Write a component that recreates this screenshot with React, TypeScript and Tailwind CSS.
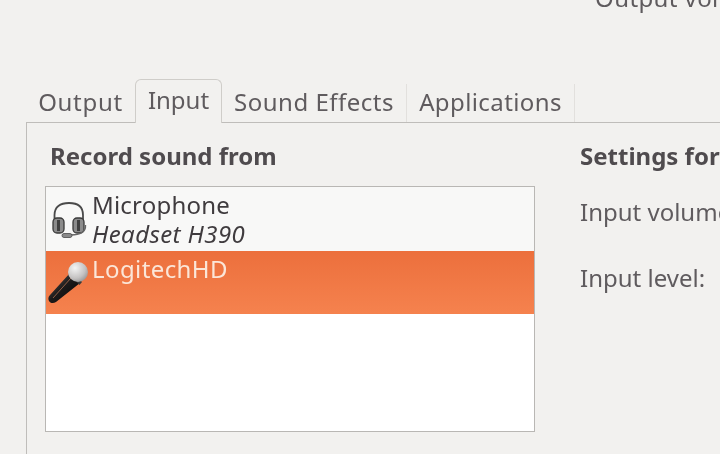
const font = "font-['Noto_Sans','Open_Sans',sans-serif]";

function Headset() {
  return (
    <svg width="38" height="40" viewBox="0 0 38 40" fill="none">
      <path d="M4.5 19 V14 C4.5 6 10 2 19 2 C28 2 33 6 33 14 V19" stroke="#4a4a4a" strokeWidth="1.8" />
      <rect x="3" y="17" width="11" height="15" rx="4" fill="#8b8b8b" stroke="#3a3a3a" strokeWidth="1.3" />
      <rect x="23" y="17" width="11" height="15" rx="4" fill="#8b8b8b" stroke="#3a3a3a" strokeWidth="1.3" />
      <rect x="7" y="19" width="3" height="11" fill="#3f3f3f" />
      <rect x="27" y="19" width="3" height="11" fill="#3f3f3f" />
      <path d="M35.5 24 C36 31 30 34 21 34" stroke="#666" strokeWidth="1.4" />
      <rect x="12" y="32.5" width="10" height="4" rx="2" fill="#8a8a8a" stroke="#4a4a4a" strokeWidth="0.8" />
    </svg>
  );
}

function Mic() {
  return (
    <svg width="44" height="46" viewBox="0 0 44 46" fill="none">
      <defs>
        <radialGradient id="h" cx="0.35" cy="0.3" r="0.85">
          <stop offset="0" stopColor="#f4f4f4" />
          <stop offset="0.6" stopColor="#c4c2c2" />
          <stop offset="1" stopColor="#8a8888" />
        </radialGradient>
        <linearGradient id="b" x1="0" y1="0" x2="1" y2="1">
          <stop offset="0" stopColor="#6a625e" />
          <stop offset="0.48" stopColor="#1c1a1a" />
          <stop offset="1" stopColor="#050505" />
        </linearGradient>
      </defs>
      <path d="M23 14 L33 24 L9 43 C6 45 3 44 2 42 C1 40 1 38 3 36 Z" fill="url(#b)" />
      <path d="M6 39 L24 19" stroke="#b0704f" strokeWidth="0.8" />
      <path d="M21.5 15 L32.5 26 L35 23 L24 12 Z" fill="#3a3a3a" />
      <circle cx="31" cy="13" r="10" fill="url(#h)" />
    </svg>
  );
}

export default function App() {
  return (
    <div className={`${font} w-[720px] h-[454px] overflow-hidden bg-[#f2f1ef] text-[#5f5b5e] flex flex-col blur-[0.4px]`}>
      <div className="h-[65px] shrink-0 pl-[595px] text-[24px] leading-[24px] -mt-[14px] whitespace-nowrap tracking-[0.4px]">Output volume:</div>
      <div className="mt-[28px] flex items-end h-[43px] shrink-0 pl-[26px] text-[24px]">
        <div className="w-[109px] h-[38px] pb-[2px] flex items-center justify-center tracking-[0.7px]">Output</div>
        <div className="w-[87px] h-[44px] -mb-px pb-[4px] flex items-center justify-center bg-[#f2f1ef] border border-b-0 border-[#cfcdc9] rounded-t-md z-10">Input</div>
        <div className="w-[185px] h-[38px] pb-[2px] flex items-center justify-center border-r border-[#e2e0dd] tracking-[0.5px]">Sound Effects</div>
        <div className="w-[168px] h-[38px] pb-[2px] flex items-center justify-center border-r border-[#e2e0dd] tracking-[0.4px]">Applications</div>
      </div>
      <div className="flex-1 ml-[26px] border-t border-l border-[#bfbdba] flex min-h-0">
        <div className="w-[509px] shrink-0 pl-[18px] flex flex-col">
          <div className="h-[63px] pl-[5px] pt-[18px] font-bold text-[24px] leading-[30px] text-[#4f4b4e] whitespace-nowrap">Record sound from</div>
          <div className="w-[490px] h-[246px] border border-[#b9b7b4] bg-white">
            <div className="h-[64px] flex bg-[#f8f8f7] text-[#3f3b3e]">
              <div className="w-[46px] pl-[4px] pt-[14px]"><Headset /></div>
              <div className="text-[24px] leading-[28px] pt-[4px] whitespace-nowrap">
                <div className="tracking-[0.2px]">Microphone</div>
                <div className="italic tracking-[0.4px] mt-px">Headset H390</div>
              </div>
            </div>
            <div className="h-[63px] flex bg-gradient-to-b from-[#ec6f3c] to-[#f5824e] text-[#fbe6d8]">
              <div className="w-[46px] pl-[1px] pt-[8px]"><Mic /></div>
              <div className="text-[24px] leading-[28px] pt-[4px] tracking-[0.4px]">LogitechHD</div>
            </div>
          </div>
        </div>
        <div className="flex-1 pl-[44px] whitespace-nowrap overflow-hidden">
          <div className="h-[63px] pt-[18px] font-bold text-[24px] leading-[30px] text-[#4f4b4e]">Settings for</div>
          <div className="text-[24px] leading-[30px] mt-[11px]">Input volume</div>
          <div className="text-[24px] leading-[30px] mt-[36px]">Input level:</div>
        </div>
      </div>
    </div>
  );
}
